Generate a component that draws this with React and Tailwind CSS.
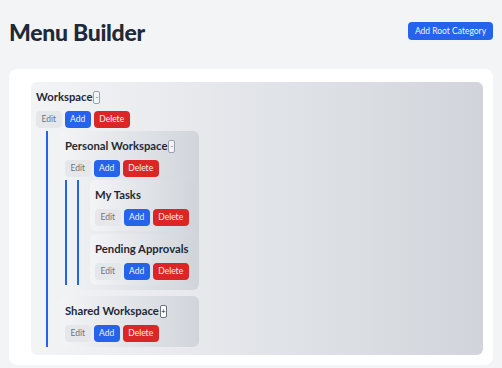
import React from "react";

const tree = {
  name: "Workspace",
  open: true,
  children: [
    {
      name: "Personal Workspace",
      open: true,
      children: [
        { name: "My Tasks", children: [] },
        { name: "Pending Approvals", children: [] },
      ],
    },
    { name: "Shared Workspace", open: false, children: [{ name: "Team Docs", children: [] }] },
  ],
};

const Toggle = ({ open }) => (
  <button
    className={
      "ml-px h-[13px] w-[7px] rounded-[2px] border text-[8px] leading-none flex items-center justify-center " +
      (open ? "border-gray-400 bg-gray-100 text-gray-500" : "border-gray-500 bg-white text-gray-900")
    }
  >
    {open ? "-" : "+"}
  </button>
);

const Actions = () => (
  <div className="mt-[4px] flex gap-[3px] text-[8.5px] leading-none">
    <button className="h-[17px] px-[5.5px] rounded bg-[#e5e7eb] text-[#6b7280]">Edit</button>
    <button className="h-[17px] px-[5.5px] rounded bg-[#2563eb] text-blue-50">Add</button>
    <button className="h-[17px] px-[5.5px] rounded bg-[#dc2626] text-red-50">Delete</button>
  </div>
);

const Item = ({ node, depth }) => {
  const hasKids = node.children.length > 0;
  const showKids = hasKids && node.open;

  return (
    <div
      className={
        "rounded-md bg-gradient-to-r from-[#f3f4f6] to-[#d1d5db] p-[5px] " +
        (depth === 0 ? "pb-[8px]" : "")
      }
    >
      <div className="h-[20px] flex items-center">
        <span className="text-[11.3px] font-bold text-[#1f2937]">{node.name}</span>
        {hasKids && <Toggle open={node.open} />}
      </div>
      <Actions />

      {showKids && depth === 0 && (
        <div className="mt-[3px] ml-[10px] border-l-2 border-[#2563eb] pl-[12px] w-fit flex flex-col gap-[6px]">
          {node.children.map((c) => (
            <Item key={c.name} node={c} depth={depth + 1} />
          ))}
        </div>
      )}

      {showKids && depth > 0 && (
        <div className="mt-[3px] border-l-2 border-[#2563eb] pl-[10px]">
          <div className="border-l-2 border-[#2563eb] pl-[11px] flex flex-col gap-[3px]">
            {node.children.map((c) => (
              <Item key={c.name} node={c} depth={depth + 1} />
            ))}
          </div>
        </div>
      )}
    </div>
  );
};

export default function App() {
  return (
    <div className="min-h-screen bg-[#f3f4f6] px-[9px] pt-[16px] font-['Lato',sans-serif]">
      <div className="flex justify-between items-start">
        <h1 className="text-[23px] leading-8 font-black tracking-[-0.3px] text-[#1f2937]">Menu Builder</h1>
        <button className="mt-[6px] h-[18px] w-[85px] rounded bg-[#2563eb] text-blue-50 text-[8.5px] leading-none">
          Add Root Category
        </button>
      </div>

      <div className="mt-[21px] bg-white rounded-lg pl-[22px] pr-[10px] pt-[13px] pb-[10px]">
        <Item node={tree} depth={0} />
      </div>
    </div>
  );
}
